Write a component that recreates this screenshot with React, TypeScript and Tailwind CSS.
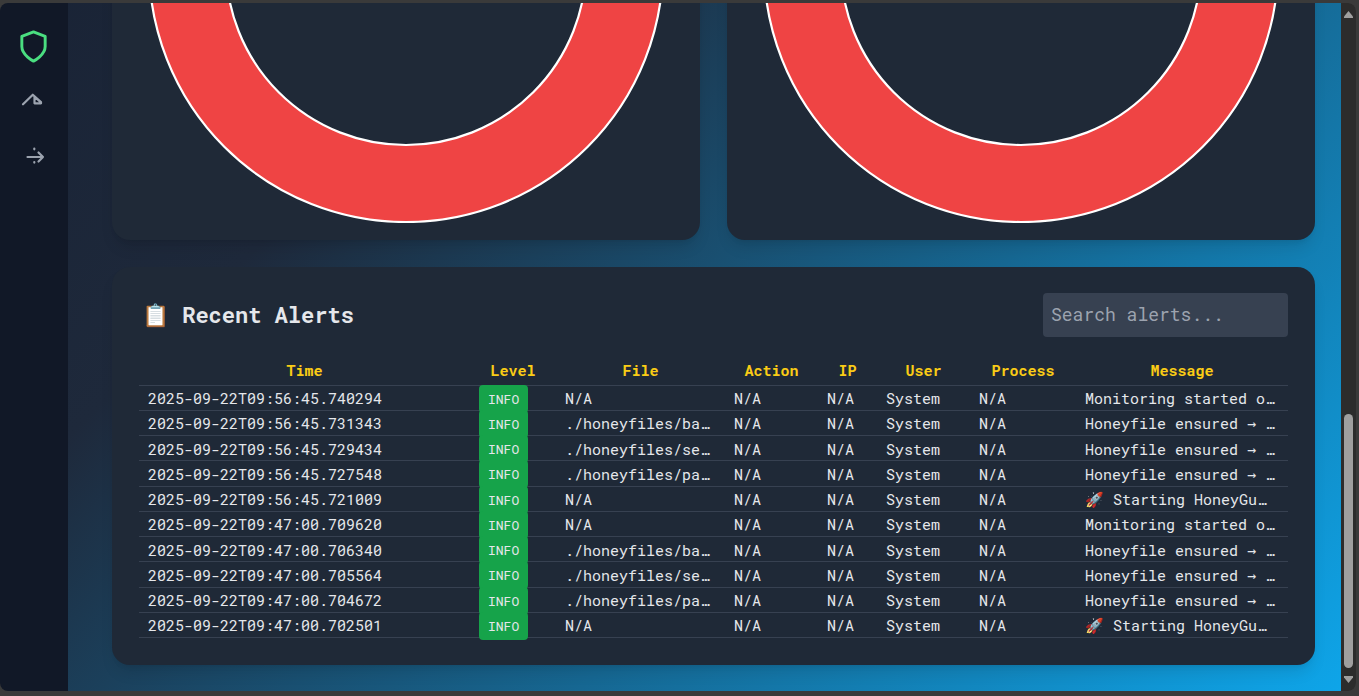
import React, { useState } from "react";

type Alert = {
  time: string;
  file: string;
  message: string;
};

const alerts: Alert[] = [
  { time: "2025-09-22T09:56:45.740294", file: "N/A", message: "Monitoring started o…" },
  { time: "2025-09-22T09:56:45.731343", file: "./honeyfiles/ba…", message: "Honeyfile ensured → …" },
  { time: "2025-09-22T09:56:45.729434", file: "./honeyfiles/se…", message: "Honeyfile ensured → …" },
  { time: "2025-09-22T09:56:45.727548", file: "./honeyfiles/pa…", message: "Honeyfile ensured → …" },
  { time: "2025-09-22T09:56:45.721009", file: "N/A", message: "🚀 Starting HoneyGu…" },
  { time: "2025-09-22T09:47:00.709620", file: "N/A", message: "Monitoring started o…" },
  { time: "2025-09-22T09:47:00.706340", file: "./honeyfiles/ba…", message: "Honeyfile ensured → …" },
  { time: "2025-09-22T09:47:00.705564", file: "./honeyfiles/se…", message: "Honeyfile ensured → …" },
  { time: "2025-09-22T09:47:00.704672", file: "./honeyfiles/pa…", message: "Honeyfile ensured → …" },
  { time: "2025-09-22T09:47:00.702501", file: "N/A", message: "🚀 Starting HoneyGu…" },
];

const columns = ["Time", "Level", "File", "Action", "IP", "User", "Process", "Message"];

function Sidebar() {
  return (
    <nav className="flex w-[68px] shrink-0 flex-col items-center bg-[#111827] pr-px pt-[26px] text-[#9ca3af]">
      <svg width="35" height="35" viewBox="0 0 24 24" fill="none" stroke="#4ade80" strokeWidth="2" strokeLinecap="round" strokeLinejoin="round" aria-hidden="true">
        <path d="M12 22s8-4 8-10V5l-8-3-8 3v7c0 6 8 10 8 10z" />
      </svg>
      <a href="#home" aria-label="Home" className="mt-[22px]">
        <svg width="29" height="29" viewBox="0 0 29 29" fill="none" stroke="currentColor" strokeWidth="2.200" strokeLinecap="round" strokeLinejoin="round">
          <path d="M4 18.300L13.800 8.700L22 16V17.300H15.500V10.500L21 15.800" />
        </svg>
      </a>
      <a href="#logout" aria-label="Log out" className="mt-[27px]">
        <svg width="29" height="29" viewBox="0 0 29 29" fill="none" stroke="currentColor" strokeWidth="2.200" strokeLinecap="round" strokeLinejoin="round">
          <path d="M8.500 15H24M19.500 10.500L24 15L19.500 19.500M15.300 6.500V7.300M15.300 20V20.600" />
        </svg>
      </a>
    </nav>
  );
}

function DonutCard({ label }: { label: string }) {
  return (
    <section className="rounded-[18px] bg-[#1f2937] px-[26px] pb-[17px] pt-6 shadow-lg">
      <svg viewBox="0 0 536 516" className="w-full" role="img" aria-label={label}>
        <circle cx="268" cy="258" r="218.500" fill="none" stroke="#ef4444" strokeWidth="77" />
        <circle cx="268" cy="258" r="257" fill="none" stroke="#fff" strokeWidth="2.200" />
        <circle cx="268" cy="258" r="180" fill="none" stroke="#fff" strokeWidth="2.200" />
      </svg>
    </section>
  );
}

function AlertsTable({ rows }: { rows: Alert[] }) {
  return (
    <table className="h-[282px] w-full table-fixed border-collapse whitespace-nowrap text-[15px] leading-5">
      <colgroup>
        <col />
        <col className="w-[86px]" />
        <col className="w-[169px]" />
        <col className="w-[93px]" />
        <col className="w-[59px]" />
        <col className="w-[93px]" />
        <col className="w-[106px]" />
        <col className="w-[212px]" />
      </colgroup>
      <thead>
        <tr className="h-[29px] border-b border-[#374151] text-[#facc15]">
          {columns.map((c) => (
            <th key={c} className="p-0 text-center font-bold">{c}</th>
          ))}
        </tr>
      </thead>
      <tbody>
        {rows.map((a) => (
          <tr key={a.time} className="border-b border-[#374151]">
            <td className="pb-0 pl-[9px] pt-px">{a.time}</td>
            <td className="pb-0 pl-[9px] pt-px">
              <span className="rounded bg-[#16a34a] px-[9px] py-[5px] text-[13px]">INFO</span>
            </td>
            <td className="pb-0 pl-[9px] pt-px">{a.file}</td>
            <td className="pb-0 pl-[9px] pt-px">N/A</td>
            <td className="pb-0 pl-[9px] pt-px">N/A</td>
            <td className="pb-0 pl-[9px] pt-px">System</td>
            <td className="pb-0 pl-[9px] pt-px">N/A</td>
            <td className="pb-0 pl-[9px] pt-px">{a.message}</td>
          </tr>
        ))}
      </tbody>
    </table>
  );
}

function Scrollbar() {
  return (
    <div aria-hidden="true" className="flex w-[15px] shrink-0 flex-col items-center rounded-r-lg bg-[#2c2c2c] pb-2 pt-2">
      <svg width="9" height="7" viewBox="0 0 9 7" fill="#9f9f9f"><path d="M4.500 0L9 5.500V7H0V5.500Z" /></svg>
      <div className="mb-2 mt-auto h-[254px] w-[9px] rounded-full bg-[#9f9f9f]" />
      <svg width="9" height="7" viewBox="0 0 9 7" fill="#9f9f9f"><path d="M0 0H9V1.500L4.500 7L0 1.500Z" /></svg>
    </div>
  );
}

export default function App() {
  const [query, setQuery] = useState("");
  const rows = alerts.filter((a) => Object.values(a).some((v) => v.toLowerCase().includes(query.toLowerCase())));

  return (
    <div className="h-screen bg-[#3a3a3a] pb-[5px] pr-[3px] pt-[3px] font-['Roboto_Mono','DejaVu_Sans_Mono',monospace] text-[#e5e7eb]">
      <div className="flex h-full overflow-hidden rounded-lg">
        <Sidebar />
        <div className="flex min-w-0 flex-1 flex-col justify-end overflow-hidden">
          <main className="flex min-h-[1781px] shrink-0 flex-col justify-end gap-[27px] bg-[linear-gradient(135deg,#0f172a,#1e293b_50%,#0ea5e9)] pb-[26px] pl-11 pr-[26px]">
            <div className="grid grid-cols-2 gap-[27px]">
              <DonutCard label="Alerts by level" />
              <DonutCard label="Alerts by action" />
            </div>
            <section className="rounded-[18px] bg-[#1f2937] p-[27px] pt-[26px] shadow-lg">
              <div className="mb-[19px] flex items-center justify-between">
                <h2 className="pl-[3px] text-[22px] font-bold leading-8">📋 Recent Alerts</h2>
                <input
                  type="text"
                  aria-label="Search alerts"
                  placeholder="Search alerts..."
                  value={query}
                  onChange={(e) => setQuery(e.target.value)}
                  className="h-11 w-[245px] rounded bg-[#374151] px-2 pb-[2px] text-[18px] outline-none placeholder:text-[#9ca3af]"
                />
              </div>
              <AlertsTable rows={rows} />
            </section>
          </main>
        </div>
        <Scrollbar />
      </div>
    </div>
  );
}
